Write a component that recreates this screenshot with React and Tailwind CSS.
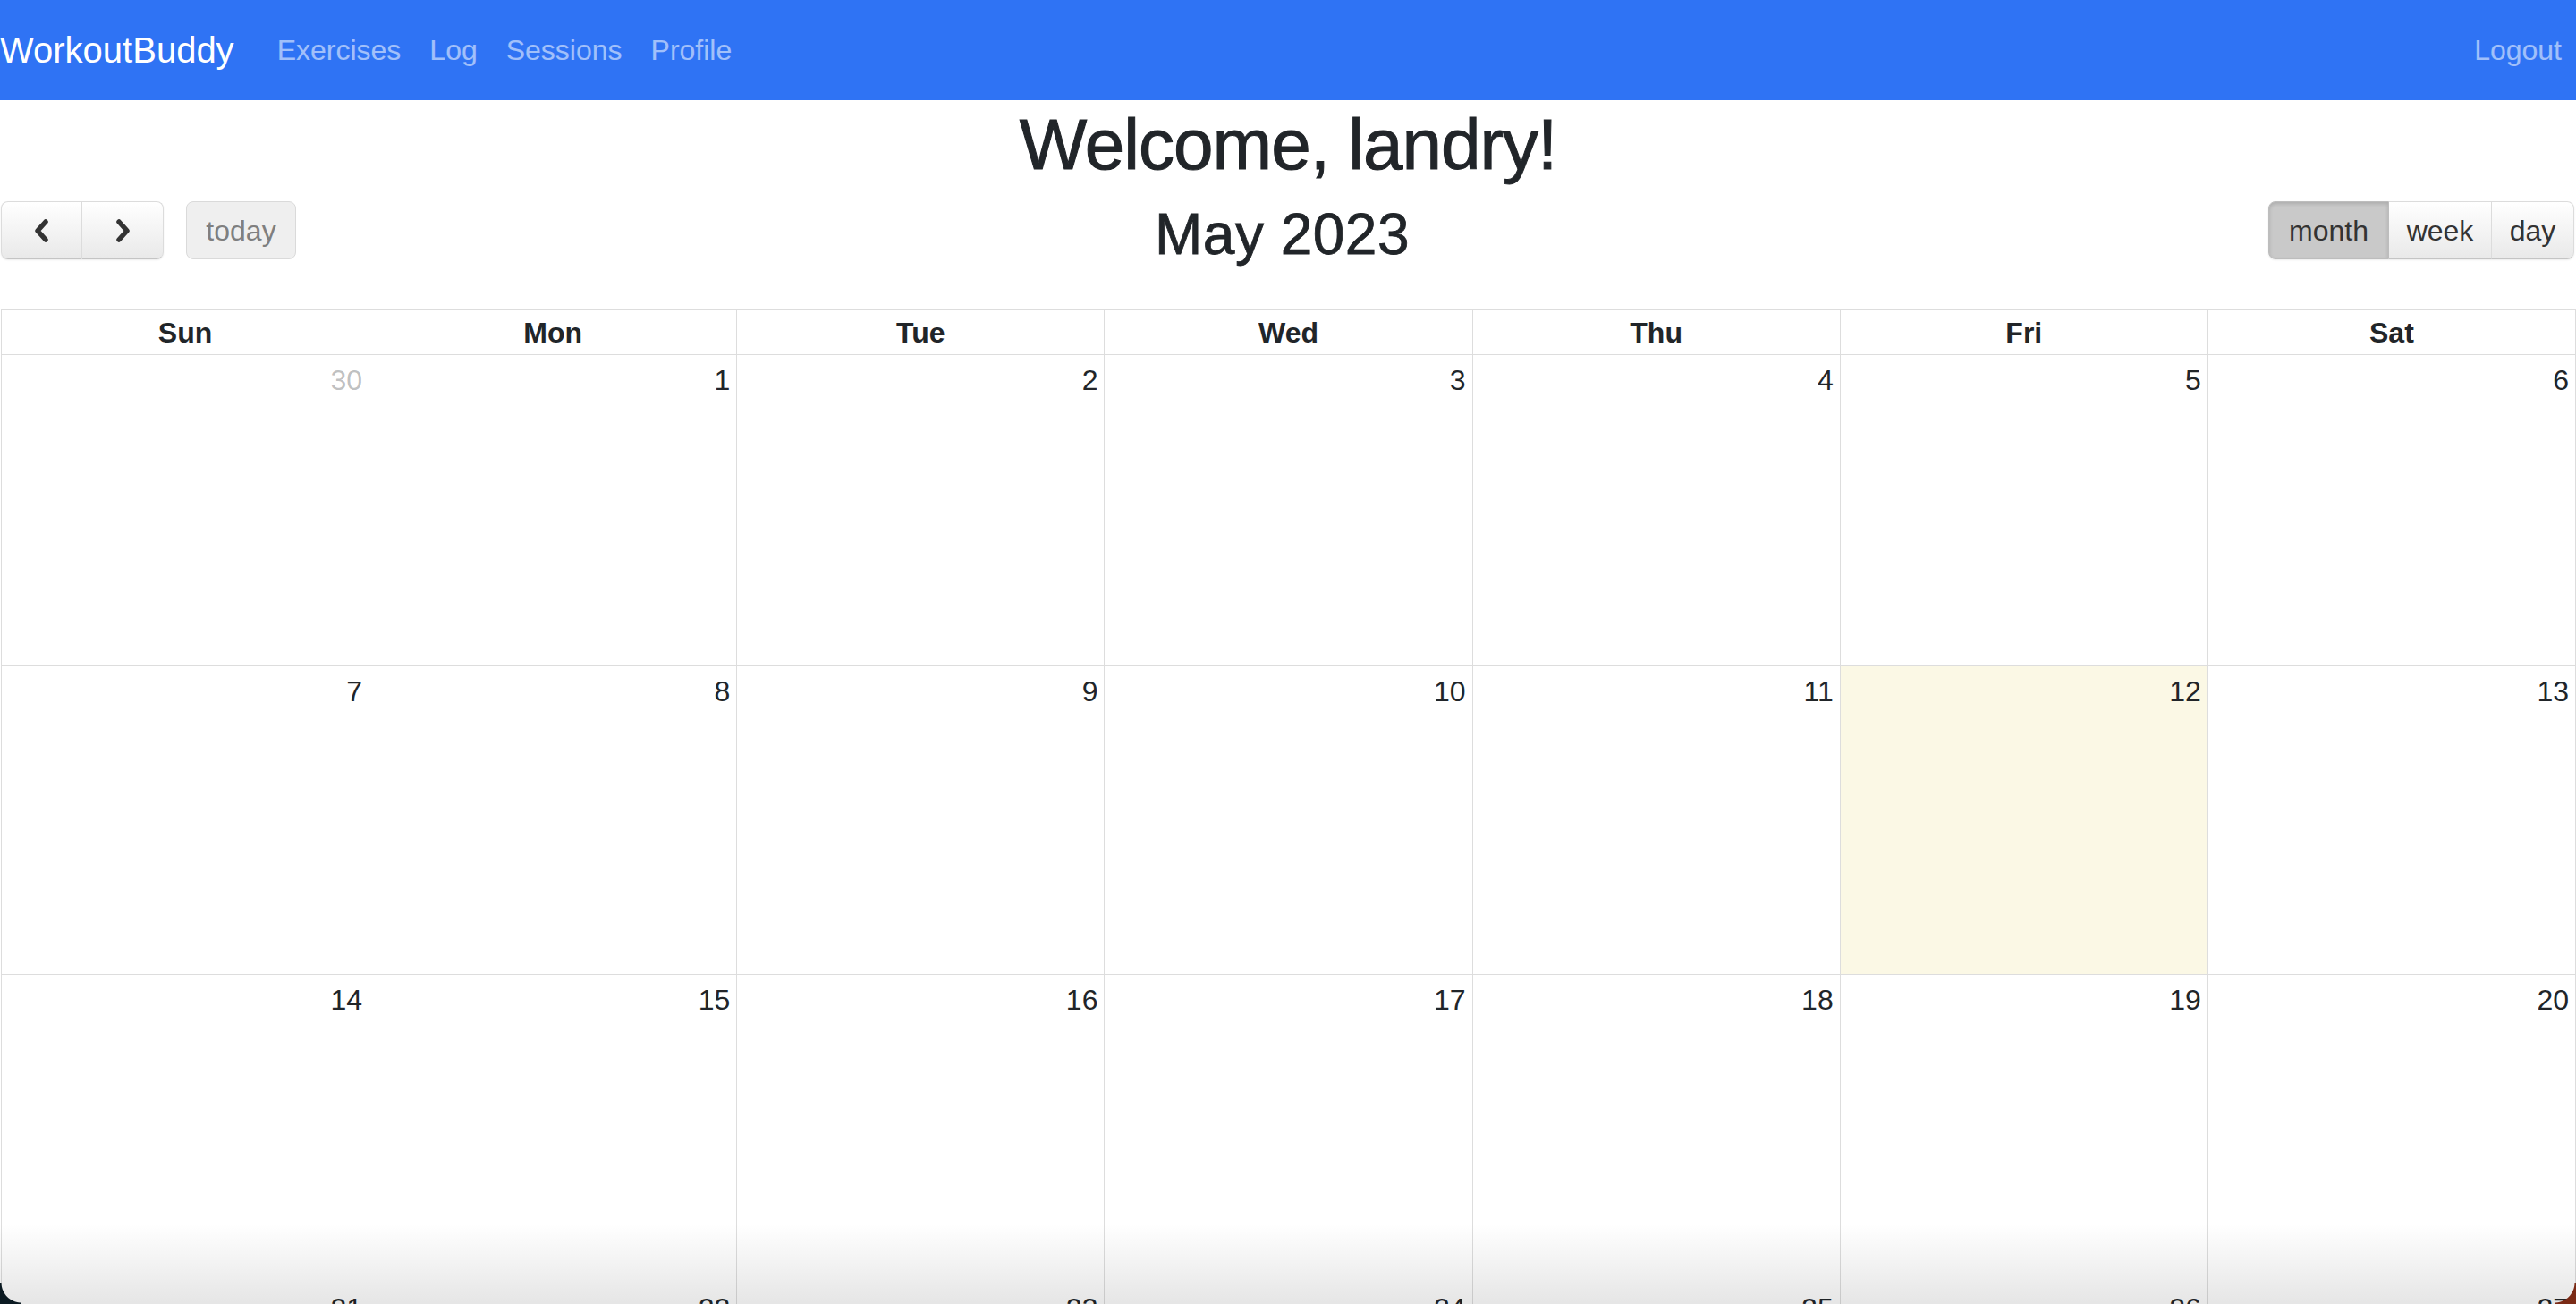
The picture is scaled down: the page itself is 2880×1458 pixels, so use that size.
import React from "react";

const weeks = [
  [[30, true], [1], [2], [3], [4], [5], [6]],
  [[7], [8], [9], [10], [11], [12, false, true], [13]],
  [[14], [15], [16], [17], [18], [19], [20]],
  [[21], [22], [23], [24], [25], [26], [27]],
  [[28], [29], [30], [31], [1, true], [2, true], [3, true]],
];

const days = ["Sun", "Mon", "Tue", "Wed", "Thu", "Fri", "Sat"];

function Chevron({ dir }) {
  return (
    <svg width="24" height="30" viewBox="0 0 24 30" className="block">
      <polyline
        points={dir === "left" ? "16,5 7,15 16,25" : "8,5 17,15 8,25"}
        fill="none"
        stroke="#333"
        strokeWidth="5.5"
        strokeLinecap="round"
        strokeLinejoin="round"
      />
    </svg>
  );
}

export default function App() {
  return (
    <div className="relative w-[2880px] h-[1458px] overflow-hidden bg-white font-['Liberation_Sans',Arial,sans-serif] text-[#212529]">
      <nav className="h-[112px] bg-[#2f73f4] flex items-center">
        <span className="text-[40px] leading-[60px] text-white mr-[32px]">WorkoutBuddy</span>
        <div className="flex text-[32px] leading-[48px] text-white/55">
          <span className="px-[16px]">Exercises</span>
          <span className="px-[16px]">Log</span>
          <span className="px-[16px]">Sessions</span>
          <span className="px-[16px]">Profile</span>
        </div>
        <span className="ml-auto px-[16px] text-[32px] leading-[48px] text-white/55">Logout</span>
      </nav>

      <h1 className="h-[96px] mb-[16px] pt-[2px] text-center text-[80px] leading-[96px] font-medium tracking-[-1px] [-webkit-text-stroke:1px_#212529]">
        Welcome, landry!
      </h1>

      <div className="h-[122px] flex items-start">
        <div className="flex items-start pl-[1px] pt-[1px] gap-[25px]">
          <div className="flex h-[65px] shadow-[0_1px_2px_rgba(0,0,0,0.08)] rounded-[8px]">
            <div className="w-[91px] h-full flex items-center justify-center bg-gradient-to-b from-white to-[#e9e9e9] border border-[#dcdcdc] border-b-[#c4c4c4] rounded-l-[8px]">
              <Chevron dir="left" />
            </div>
            <div className="w-[91px] h-full flex items-center justify-center bg-gradient-to-b from-white to-[#e9e9e9] border border-l-0 border-[#dcdcdc] border-b-[#c4c4c4] rounded-r-[8px]">
              <Chevron dir="right" />
            </div>
          </div>
          <div className="w-[123px] h-[65px] flex items-center justify-center bg-[#efefef] border border-[#dadada] rounded-[8px] text-[32px] text-[#7f7f7f]">
            today
          </div>
        </div>
        <h2 className="flex-1 text-[64px] leading-[77px] font-medium text-center tracking-[0.5px] [-webkit-text-stroke:0.8px_#212529]">
          May 2023
        </h2>
        <div className="flex justify-end pr-[2px] pt-[1px]">
          <div className="flex h-[65px] text-[32px] text-[#333] shadow-[0_1px_2px_rgba(0,0,0,0.08)] rounded-[8px]">
            <div className="w-[135px] flex items-center justify-center bg-[#c9c9c9] border border-[#bdbdbd] rounded-l-[8px] shadow-[inset_0_2px_4px_rgba(0,0,0,0.15)]">
              month
            </div>
            <div className="w-[115px] flex items-center justify-center bg-gradient-to-b from-white to-[#e9e9e9] border border-l-0 border-[#dcdcdc] border-b-[#c4c4c4]">
              week
            </div>
            <div className="w-[92px] flex items-center justify-center bg-gradient-to-b from-white to-[#e9e9e9] border border-l-0 border-[#dcdcdc] border-b-[#c4c4c4] rounded-r-[8px]">
              day
            </div>
          </div>
        </div>
      </div>

      <div className="border-t border-l border-[#ddd] ml-[1px]">
        <div className="grid grid-cols-7">
          {days.map((d) => (
            <div
              key={d}
              className="h-[50px] flex items-center justify-center border-r border-b border-[#ddd] text-[32px] font-bold"
            >
              {d}
            </div>
          ))}
        </div>
        {weeks.map((w, i) => (
          <div key={i} className="grid grid-cols-7">
            {w.map(([n, other, today], j) => (
              <div
                key={j}
                className={`${i === 0 ? "h-[348px]" : "h-[345px]"} border-r border-b border-[#ddd] ${today ? "bg-[#fbf8e5]" : ""}`}
              >
                <div className={`text-right pr-[7px] pt-[4px] text-[32px] leading-[48px] ${other ? "text-[#212529]/30" : ""}`}>
                  {n}
                </div>
              </div>
            ))}
          </div>
        ))}
      </div>

      <div className="pointer-events-none absolute left-0 right-0 bottom-0 h-[90px] bg-gradient-to-b from-transparent to-black/10" />
      <div className="pointer-events-none absolute left-0 bottom-0 w-[24px] h-[24px] bg-[radial-gradient(circle_at_100%_0,transparent_22px,#0b1a22_23px)]" />
      <div className="pointer-events-none absolute right-0 bottom-0 w-[24px] h-[24px] bg-[radial-gradient(circle_at_0_0,transparent_22px,#7a2a15_23px)]" />
    </div>
  );
}
